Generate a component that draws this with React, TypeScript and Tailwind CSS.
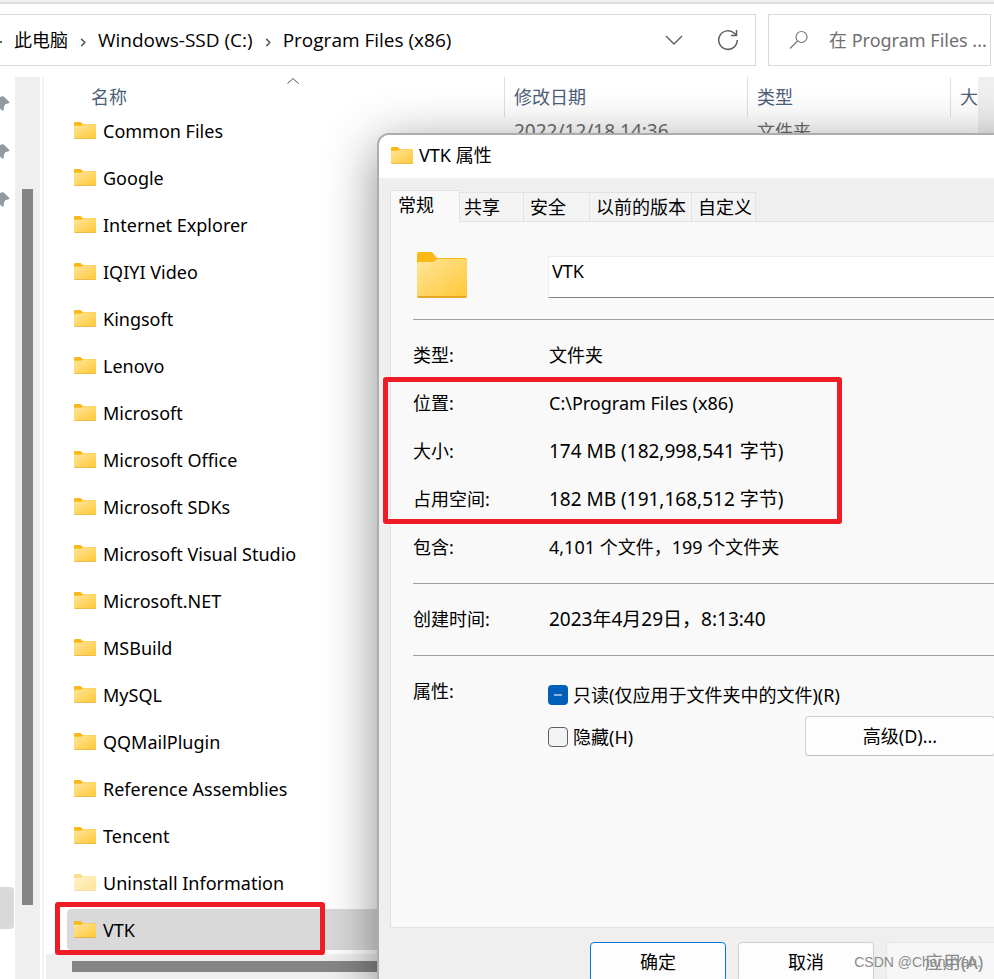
import { useEffect, useRef, type ReactNode } from "react";

const folders = [
  "Common Files",
  "Google",
  "Internet Explorer",
  "IQIYI Video",
  "Kingsoft",
  "Lenovo",
  "Microsoft",
  "Microsoft Office",
  "Microsoft SDKs",
  "Microsoft Visual Studio",
  "Microsoft.NET",
  "MSBuild",
  "MySQL",
  "QQMailPlugin",
  "Reference Assemblies",
  "Tencent",
  "Uninstall Information",
  "VTK",
];

function FolderIcon({ className }: { className: string }) {
  return (
    <svg viewBox="0 0 50 46" preserveAspectRatio="none" className={className} aria-hidden="true">
      <defs>
        <linearGradient id="folder" x1="0" y1="0" x2="1" y2="1">
          <stop offset="0" stopColor="#ffe59b" />
          <stop offset="1" stopColor="#ffc937" />
        </linearGradient>
      </defs>
      <path d="M0 2q0-2 2-2h11q2 0 3 1l3 4q1 1 3 1h26q2 0 2 2v8H0z" fill="#fbb917" />
      <path d="M0 12q0-2 2-2h13q2 0 3-1l1-1q1-1 3-1h26q2 0 2 2v33q0 2-2 2H2q-2 0-2-2z" fill="url(#folder)" />
      <path d="M0 42.500q0 1.500 2 1.500h46q2 0 2-1.500v1.500q0 2-2 2H2q-2 0-2-2z" fill="#e6a620" />
    </svg>
  );
}

function CrumbArrow() {
  return (
    <svg viewBox="0 0 6 10" className="mx-3 mt-1 h-[9px] w-[6px] shrink-0" fill="none" stroke="#5f5f5f" strokeWidth="1.800">
      <path d="M1 1l4 4-4 4" />
    </svg>
  );
}

function PinIcon() {
  return (
    <svg viewBox="0 0 10 16" className="h-4 w-[10px]" fill="#8f9aa2">
      <path d="M0 1l3-1 6.500 6-1 1.500-3 .5-1.500 2.500-.5 4L2 14.500l-2-2z" />
    </svg>
  );
}

function AddressBar() {
  return (
    <div className="mt-[10px] flex h-[52px] gap-3 pr-[3px]">
      <nav className="flex min-w-0 flex-1 items-center border border-l-0 border-[#d9d9d9] pr-4 whitespace-nowrap">
        <span className="mt-1 mr-3 size-[2px] bg-[#5f5f5f]" />
        <a href="#">此电脑</a>
        <CrumbArrow />
        <a href="#" className="font-['Open_Sans',sans-serif] text-[19px]">
          Windows-SSD (C:)
        </a>
        <CrumbArrow />
        <a href="#" className="font-['Open_Sans',sans-serif] text-[19px]">
          Program Files (x86)
        </a>
        <button type="button" aria-label="展开" className="mr-[34px] ml-auto">
          <svg viewBox="0 0 18 10" className="h-[10px] w-[18px]" fill="none" stroke="#5f5f5f" strokeWidth="1.400">
            <path d="M1 1l8 8 8-8" />
          </svg>
        </button>
        <button type="button" aria-label="刷新">
          <svg viewBox="0 0 22 22" className="size-[22px]" fill="none" stroke="#5f5f5f" strokeWidth="1.500">
            <path d="M20.300 11a9.300 9.300 0 1 1-3-6.800l2 2M19.500 1v5.500H14" />
          </svg>
        </button>
      </nav>
      <label className="flex w-[223px] items-center border border-[#d9d9d9] pl-5">
        <svg viewBox="0 0 20 20" className="mr-5 size-5 shrink-0" fill="none" stroke="#777" strokeWidth="1.200">
          <circle cx="12.500" cy="7" r="5.500" />
          <path d="M8.500 11L1 18.500" />
        </svg>
        <input
          aria-label="搜索"
          placeholder="在 Program Files ..."
          className="w-full min-w-0 outline-none placeholder:text-[#707070]"
        />
      </label>
    </div>
  );
}

function FileTable() {
  return (
    <table className="ml-[23px] w-[960px] table-fixed border-collapse text-left">
      <colgroup>
        <col className="w-[437px]" />
        <col className="w-[243px]" />
        <col className="w-[203px]" />
        <col />
      </colgroup>
      <thead className="text-[#4c607a]">
        <tr>
          <th className="h-[30px] p-0 font-normal">
            <div className="relative -mb-[10px] flex h-10 items-center pl-6">
              名称
              <svg viewBox="0 0 12 6" className="absolute top-px left-[220px] h-[6px] w-3" fill="none" stroke="#555">
                <path d="M.5 5.500L6 .5l5.500 5" />
              </svg>
            </div>
          </th>
          {["修改日期", "类型", "大"].map((name) => (
            <th key={name} className="h-[30px] p-0 font-normal">
              <div className="-mb-[10px] flex h-10 items-center border-l border-[#e0e0e0] pl-[9px]">{name}</div>
            </th>
          ))}
        </tr>
      </thead>
      <tbody>
        {folders.map((name, i) => {
          const selected = name === "VTK" ? "bg-[#d9d9d9]" : "";
          return (
            <tr key={name} className="h-[47px]">
              <td className="p-0">
                <div className={`flex h-[41px] items-center gap-[7px] rounded-l pl-[7px] ${selected}`}>
                  <FolderIcon
                    className={`h-[17px] w-[22px] ${name === "Uninstall Information" ? "opacity-50" : ""}`}
                  />
                  {name}
                </div>
              </td>
              <td className="p-0">
                <div className={`flex h-[41px] items-center pl-[10px] text-[19px] text-[#6d6d6d] ${selected}`}>
                  {i === 0 && "2022/12/18 14:36"}
                </div>
              </td>
              <td className="p-0">
                <div className={`flex h-[41px] items-center pl-[10px] text-[#6d6d6d] ${selected}`}>
                  {i === 0 && "文件夹"}
                </div>
              </td>
              <td className="p-0">
                <div className={`h-[41px] ${selected}`} />
              </td>
            </tr>
          );
        })}
      </tbody>
    </table>
  );
}

function Row({ label, className = "", children }: { label: string; className?: string; children: ReactNode }) {
  return (
    <div className="flex h-12 items-center">
      <dt className="w-[136px] shrink-0">{label}</dt>
      <dd className={`whitespace-nowrap ${className}`}>{children}</dd>
    </div>
  );
}

function Divider() {
  return <hr className="mt-3 mb-[11px] border-[#a0a0a0]" />;
}

function PropertiesDialog() {
  const readOnly = useRef<HTMLInputElement>(null);

  useEffect(() => {
    if (readOnly.current) readOnly.current.indeterminate = true;
  }, []);

  return (
    <section
      role="dialog"
      aria-label="VTK 属性"
      className="absolute top-[133px] -right-10 -bottom-3 left-[377px] flex flex-col overflow-hidden rounded-xl border-2 border-[#adadad] bg-[#efefef] shadow-[0_12px_52px_rgba(0,0,0,0.45)]"
    >
      <header className="flex h-[43px] shrink-0 items-center gap-[6px] bg-white pb-[3px] pl-3">
        <FolderIcon className="h-[17px] w-[22px]" />
        <h1>VTK 属性</h1>
      </header>

      <div role="tablist" className="relative z-10 mt-3 -mb-px ml-[11px] flex h-8 shrink-0">
        <button
          type="button"
          role="tab"
          aria-selected="true"
          className="h-8 w-[70px] border border-b-0 border-[#e2e2e2] bg-[#f9f9f9] pb-1 pl-[7px] text-left"
        >
          常规
        </button>
        {[
          ["共享", "w-[64px] pl-1"],
          ["安全", "w-[66px] pl-[6px]"],
          ["以前的版本", "w-[102px] pl-[6px]"],
          ["自定义", "w-[64px] pl-[6px]"],
        ].map(([name, size]) => (
          <button
            key={name}
            type="button"
            role="tab"
            className={`mt-[2px] h-[29px] border-t border-r border-[#e2e2e2] bg-[#f3f3f3] text-left whitespace-nowrap ${size}`}
          >
            {name}
          </button>
        ))}
      </div>

      <div className="mx-[11px] flex-1 border border-[#e2e2e2] bg-[#f9f9f9] px-[22px] pt-[30px]">
        <div className="flex h-[55px]">
          <div className="w-[135px] shrink-0 pl-1">
            <FolderIcon className="h-[46px] w-[50px]" />
          </div>
          <input
            aria-label="名称"
            defaultValue="VTK"
            className="mt-1 h-[42px] min-w-0 flex-1 border border-[#ececec] border-b-[#868686] bg-white pb-3 pl-[3px] outline-none"
          />
        </div>
        <Divider />
        <dl>
          <Row label="类型:">文件夹</Row>
          <Row label="位置:">C:\Program Files (x86)</Row>
          <Row label="大小:" className="text-[19px]">
            174 MB (182,998,541 字节)
          </Row>
          <Row label="占用空间:" className="text-[19px]">
            182 MB (191,168,512 字节)
          </Row>
          <Row label="包含:">4,101 个文件，199 个文件夹</Row>
        </dl>
        <Divider />
        <dl>
          <Row label="创建时间:" className="text-[19px]">
            2023年4月29日，8:13:40
          </Row>
        </dl>
        <Divider />
        <div className="flex">
          <div className="flex h-12 w-[135px] shrink-0 items-center">属性:</div>
          <div className="flex-1 pt-[7px]">
            <label className="flex h-[42px] items-center gap-[5px] whitespace-nowrap">
              <span className="relative flex size-5">
                <input ref={readOnly} type="checkbox" className="size-5 appearance-none rounded bg-[#005fb8]" />
                <span className="absolute top-[9px] left-[6px] h-[2px] w-2 bg-[#8ab6de]" />
              </span>
              只读(仅应用于文件夹中的文件)(R)
            </label>
            <div className="flex h-[42px] justify-between pr-[3px]">
              <label className="flex items-center gap-[5px]">
                <input type="checkbox" className="size-5 appearance-none rounded border border-[#606060] bg-[#f3f3f3]" />
                隐藏(H)
              </label>
              <button type="button" className="h-10 w-[190px] rounded border border-[#d0d0d0] border-b-[#bcbcbc] bg-[#fdfdfd]">
                高级(D)...
              </button>
            </div>
          </div>
        </div>
      </div>

      <footer className="flex h-[61px] shrink-0 justify-end gap-3 pt-[14px] pr-[10px]">
        <button type="button" className="h-10 w-[136px] rounded border border-[#0078d4] bg-[#fdfdfd]">
          确定
        </button>
        <button type="button" className="h-10 w-[136px] rounded border border-[#d0d0d0] bg-[#fdfdfd]">
          取消
        </button>
        <button type="button" disabled className="h-10 w-[136px] rounded border border-[#e8e8e8] bg-[#f6f6f6] text-[#8a8a8a]">
          应用(A)
        </button>
      </footer>

      {/* highlight around location and sizes */}
      <div className="absolute top-[242px] left-1 h-[147px] w-[459px] rounded-[3px] border-[5px] border-[#ee1c25]" />
    </section>
  );
}

export default function App() {
  return (
    <div className="relative flex h-screen flex-col overflow-hidden bg-white font-['Noto_Sans','Noto_Sans_CJK_SC',sans-serif] text-[18px] leading-6 text-black">
      <div className="h-1 shrink-0 border-b-2 border-[#dfdfdf] bg-[#f0f0f0]" />
      <AddressBar />

      <main className="mt-[11px] flex min-h-0 flex-1">
        <aside className="flex w-[15px] shrink-0 flex-col pt-[19px]">
          <div className="flex flex-col gap-8">
            <PinIcon />
            <PinIcon />
            <PinIcon />
          </div>
          <div className="mt-auto mb-[50px] h-[42px] w-[14px] rounded-r bg-[#d9d9d9]" />
        </aside>
        <div className="flex w-[25px] shrink-0 justify-center bg-[#efefef] pt-28 pb-[74px]">
          <div className="w-[11px] bg-[#858585]" />
        </div>
        <div className="w-1 shrink-0 border-r-2 border-[#f3f3f3]" />
        <div className="flex min-w-0 flex-1 flex-col overflow-hidden">
          <div className="min-h-0 flex-1 overflow-hidden">
            <FileTable />
          </div>
          <div className="ml-[2px] h-[25px] shrink-0 bg-[#efefef] pt-[7px] pl-[26px]">
            <div className="h-[11px] bg-[#858585]" />
          </div>
        </div>
        <div className="w-4 shrink-0 bg-[#efefef]" />
      </main>

      <PropertiesDialog />
      <div className="absolute top-[902px] left-[55px] h-[53px] w-[270px] rounded-[3px] border-[5px] border-[#ee1c25]" />
      <span className="absolute right-[13px] bottom-[7px] font-['Liberation_Sans',sans-serif] text-[14px] leading-5 text-[#8c8c8c]">
        CSDN @ChangYan.
      </span>
    </div>
  );
}
